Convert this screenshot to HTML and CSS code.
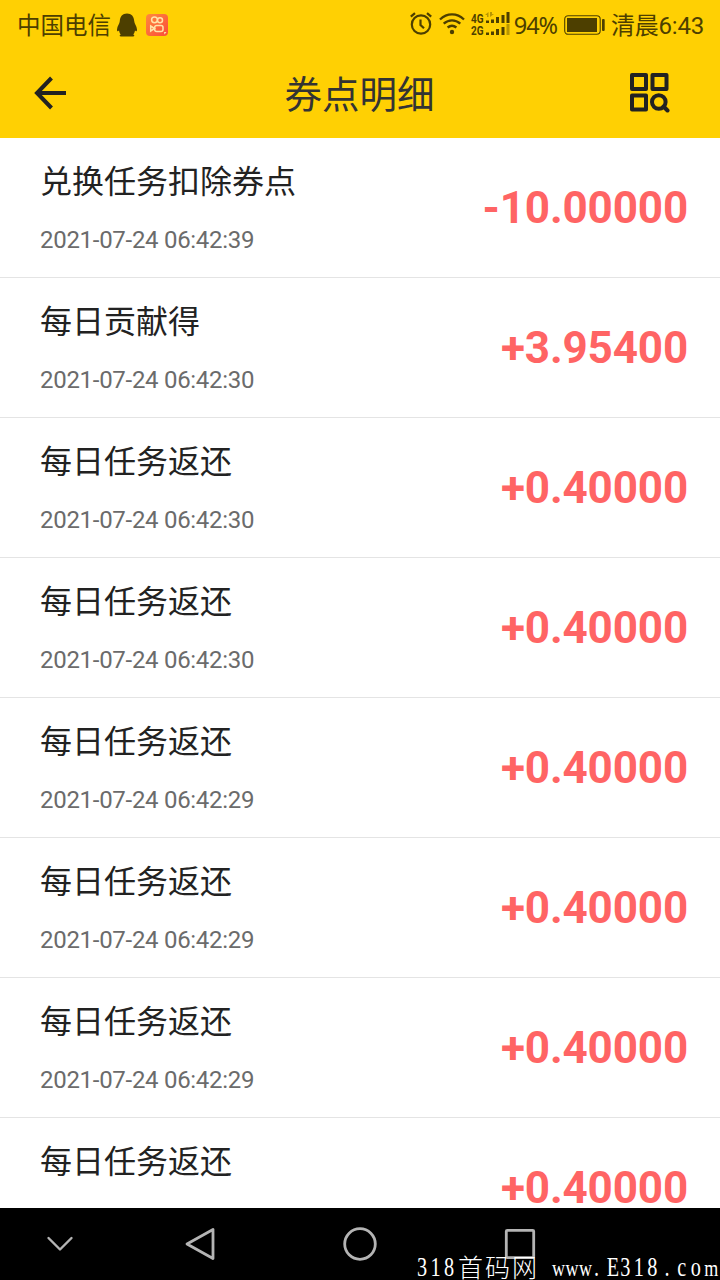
FILE: index.html
```html
<!DOCTYPE html>
<html lang="zh-CN">
<head>
    <meta charset="UTF-8">
    <meta name="viewport" content="width=device-width, initial-scale=1.0">
    <title>券点明细</title>
    <link rel="stylesheet" href="styles.css">
</head>
<body>
    <div class="screen">
        <header>
            <div class="status-bar">
                <span class="carrier">中国电信</span>
                <svg class="icon-qq" width="22" height="24" viewBox="0 0 22 24">
                    <path d="M11 .5C15.500.500 18 3.500 18.200 8c.1 2.500 2.600 5 2.800 8.500.1 2-.8 2.300-2 1-.2 1.500-.9 3-1.800 4 1.600.5 1.500 2-.2 2H5c-1.700 0-1.800-1.500-.2-2-.9-1-1.600-2.500-1.800-4-1.200 1.300-2.100 1-2-1C1.200 13 3.700 10.500 3.800 8 4 3.500 6.500.500 11 .500z" fill="#4d3f00"/>
                </svg>
                <svg class="icon-app" width="22" height="22" viewBox="0 0 22 22">
                    <defs>
                        <linearGradient id="app" x1="0" y1="0" x2="1" y2="1">
                            <stop offset="0" stop-color="#ff8a3c"/>
                            <stop offset="1" stop-color="#fb4a3a"/>
                        </linearGradient>
                    </defs>
                    <rect width="22" height="22" rx="4" fill="url(#app)"/>
                    <g fill="none" stroke="#ffe3a8" stroke-width="1.500">
                        <circle cx="8.500" cy="5.800" r="2.900"/>
                        <circle cx="14" cy="6.300" r="2.500"/>
                        <rect x="8.700" y="11.500" width="8.300" height="6" rx="2"/>
                        <path d="M8.500 14.500L4.700 12v5z"/>
                    </g>
                    <path d="M18 18h2.500l-2 2.500z" fill="#ffe3a8"/>
                </svg>
                <div class="indicators">
                    <svg class="icon-alarm" width="22" height="23" viewBox="0 0 22 23" fill="none" stroke="#4d3f00" stroke-width="2.200">
                        <circle cx="11" cy="12.500" r="9.200"/>
                        <path d="M10.500 7.500v5.500l3.500 3.300M0.800 4.700L5 1.200M21.200 4.700L17 1.200"/>
                    </svg>
                    <svg class="icon-wifi" width="26" height="22" viewBox="0 0 26 22" fill="none" stroke="#4d3f00" stroke-width="2.300">
                        <path d="M1 6.500C8-.300 18-.300 25 6.500M4.700 10.700c5-4.500 11.600-4.500 16.600 0M8.600 14.500c2.800-2.300 6-2.300 8.800 0"/>
                        <circle cx="13" cy="19" r="2.200" fill="#4d3f00" stroke="none"/>
                    </svg>
                    <svg class="icon-signal" width="39" height="24" viewBox="0 0 39 24" fill="#4d3f00">
                        <text class="net" x="0" y="10.500" textLength="12.500" lengthAdjust="spacingAndGlyphs">4G</text>
                        <text class="net" x="0" y="22.500" textLength="12.500" lengthAdjust="spacingAndGlyphs">2G</text>
                        <path d="M15 8.500h3v2.500h-3zM20 7.500h3v3.500h-3zM25 5h3v6h-3zM30.500 3h3v8h-3zM35.500 0h3v11h-3z"/>
                        <path d="M15 20.500h3v2.500h-3zM20 19.500h3v3.500h-3zM25 17h3v6h-3zM30.500 15h3v8h-3z"/>
                        <path d="M35.500 12h3v11h-3zM14 3l3.500-3v5h-1.500v-2zM19 0v5l4-3h-2v-2z" opacity=".4"/>
                    </svg>
                    <span class="percent">94%</span>
                    <svg class="icon-battery" width="41" height="20" viewBox="0 0 41 20">
                        <rect x="0.700" y="0.700" width="35.500" height="18.600" rx="3.500" fill="none" stroke="#4d3f00" stroke-width="1.100"/>
                        <rect x="3" y="3" width="30" height="14" fill="#4d3f00"/>
                        <rect x="38" y="4" width="2.700" height="12" rx="1" fill="#4d3f00"/>
                    </svg>
                    <span class="time">清晨6:43</span>
                </div>
            </div>
            <div class="title-bar">
                <svg class="icon-back" width="34" height="34" viewBox="0 0 34 34" fill="none" stroke="#222" stroke-width="4">
                    <path d="M33 17H4.500M18.500 2L4 17l14.500 15"/>
                </svg>
                <h1>券点明细</h1>
                <svg class="icon-scan" width="40" height="40" viewBox="0 0 40 40" fill="none" stroke="#222" stroke-width="4" stroke-linejoin="round">
                    <rect x="2" y="2" width="14" height="14"/>
                    <rect x="22.500" y="2" width="14" height="14"/>
                    <rect x="2" y="22.500" width="14" height="14"/>
                    <circle cx="28.800" cy="29" r="6.800"/>
                    <path d="M33.500 33.500l4 4" stroke-linecap="round"/>
                </svg>
            </div>
        </header>

        <main class="records">
            <div class="record">
                <div class="info">
                    <div class="name">兑换任务扣除券点</div>
                    <div class="date">2021-07-24 06:42:39</div>
                </div>
                <div class="amount">-10.00000</div>
            </div>
            <div class="record">
                <div class="info">
                    <div class="name">每日贡献得</div>
                    <div class="date">2021-07-24 06:42:30</div>
                </div>
                <div class="amount">+3.95400</div>
            </div>
            <div class="record">
                <div class="info">
                    <div class="name">每日任务返还</div>
                    <div class="date">2021-07-24 06:42:30</div>
                </div>
                <div class="amount">+0.40000</div>
            </div>
            <div class="record">
                <div class="info">
                    <div class="name">每日任务返还</div>
                    <div class="date">2021-07-24 06:42:30</div>
                </div>
                <div class="amount">+0.40000</div>
            </div>
            <div class="record">
                <div class="info">
                    <div class="name">每日任务返还</div>
                    <div class="date">2021-07-24 06:42:29</div>
                </div>
                <div class="amount">+0.40000</div>
            </div>
            <div class="record">
                <div class="info">
                    <div class="name">每日任务返还</div>
                    <div class="date">2021-07-24 06:42:29</div>
                </div>
                <div class="amount">+0.40000</div>
            </div>
            <div class="record">
                <div class="info">
                    <div class="name">每日任务返还</div>
                    <div class="date">2021-07-24 06:42:29</div>
                </div>
                <div class="amount">+0.40000</div>
            </div>
            <div class="record">
                <div class="info">
                    <div class="name">每日任务返还</div>
                </div>
                <div class="amount">+0.40000</div>
            </div>
        </main>

        <nav class="nav-bar">
            <svg class="hide" width="34" height="34" viewBox="0 0 34 34"><path d="M5.500 11L17 22.500 28.500 11"/></svg>
            <svg width="34" height="34" viewBox="0 0 34 34"><path class="bold" d="M30 2.500v29L4 17z"/></svg>
            <svg width="34" height="34" viewBox="0 0 34 34"><circle class="bold" cx="17" cy="17" r="15.300"/></svg>
            <svg width="34" height="34" viewBox="0 0 34 34"><rect class="bold" x="3.300" y="3.300" width="27.400" height="27.400" rx="1"/></svg>
        </nav>

        <!-- watermark over the bottom bar -->
        <svg class="watermark" width="306" height="30" viewBox="0 0 306 30">
            <g transform="scale(.75 1)">
                <text x="4 22 40" y="26">318</text>
                <text class="www" x="184 202 220" y="26">www</text>
                <text x="240 257 275 293 311 334 351 369 386" y="26">.E318.co</text>
                <text class="www" x="387" y="26">m</text>
            </g>
            <text class="cjk" x="44 71 98" y="27">首码网</text>
        </svg>
    </div>
</body>
</html>
```
FILE: styles.css
```css
* {
    box-sizing: border-box;
}

body {
    margin: 0;
    background-color: #fff;
    color: #222;
    font-family: Roboto, "Noto Sans CJK SC", sans-serif;
}

.screen {
    position: relative;
    display: flex;
    flex-direction: column;
    width: 720px;
    height: 1280px;
    overflow: hidden;
}

header {
    flex: none;
    height: 138px;
    background-color: #ffd003;
}

.status-bar {
    display: flex;
    align-items: center;
    height: 48px;
    padding: 2px 16px 0 17px;
    color: #4d3f00;
    font-size: 24px;
    line-height: 28px;
    white-space: nowrap;
}

.carrier {
    padding-top: 1px;
    font-size: 23.5px;
}

.icon-qq {
    margin-left: 5px;
}

.icon-app {
    margin-left: 8px;
}

.indicators {
    display: flex;
    align-items: center;
    margin-left: auto;
}

.icon-alarm {
    margin-top: -3px;
}

.icon-wifi {
    margin: -3px 6px 0 7px;
}

.icon-signal {
    margin: -3px 4px 0 0;
    overflow: visible;
}

.net {
    font-size: 13px;
    font-weight: bold;
}

.percent {
    font-family: "Noto Sans", sans-serif;
    font-size: 23.5px;
    letter-spacing: -1.1px;
}

.icon-battery {
    margin: -1px 6px 0 7px;
}

.time {
    padding-top: 1px;
    font-size: 24px;
    letter-spacing: -0.2px;
}

.title-bar {
    display: flex;
    align-items: center;
    justify-content: space-between;
    height: 90px;
    padding: 0 50px 0 33px;
}

h1 {
    margin: 3px 0 0 22px;
    color: #333;
    font-size: 37.5px;
    font-weight: normal;
    line-height: 50px;
}

.records {
    flex: 1;
    min-height: 0;
    overflow: hidden;
}

.record {
    display: flex;
    justify-content: space-between;
    height: 140px;
    padding: 21px 32px 0 40px;
    border-bottom: 1px solid #e4e4e4;
}

.name {
    font-size: 32px;
    line-height: 46px;
}

.date {
    margin-top: 19px;
    color: #6b6b6b;
    font-size: 24px;
    line-height: 32px;
    letter-spacing: -0.29px;
}

.amount {
    padding-top: 23px;
    color: #ff6464;
    font-size: 44px;
    font-weight: bold;
    line-height: 52px;
    letter-spacing: -0.15px;
}

.nav-bar {
    display: flex;
    flex: none;
    gap: 126px;
    height: 72px;
    padding: 19px 0 0 43px;
    background-color: #000;
}

.nav-bar svg {
    fill: none;
    stroke: #b4b4b4;
    stroke-width: 2.4;
    stroke-linejoin: round;
    stroke-linecap: round;
}

.nav-bar .hide {
    margin-right: -20px;
}

.nav-bar .bold {
    stroke-width: 2.8;
}

.watermark {
    position: absolute;
    right: 0;
    bottom: 0;
    fill: #fff;
    font-family: "Liberation Serif", serif;
    font-size: 27px;
}

.watermark .www {
    font-size: 24px;
}

.watermark .cjk {
    font-family: "Noto Sans CJK SC", sans-serif;
    font-size: 25px;
    font-weight: 300;
}
```
